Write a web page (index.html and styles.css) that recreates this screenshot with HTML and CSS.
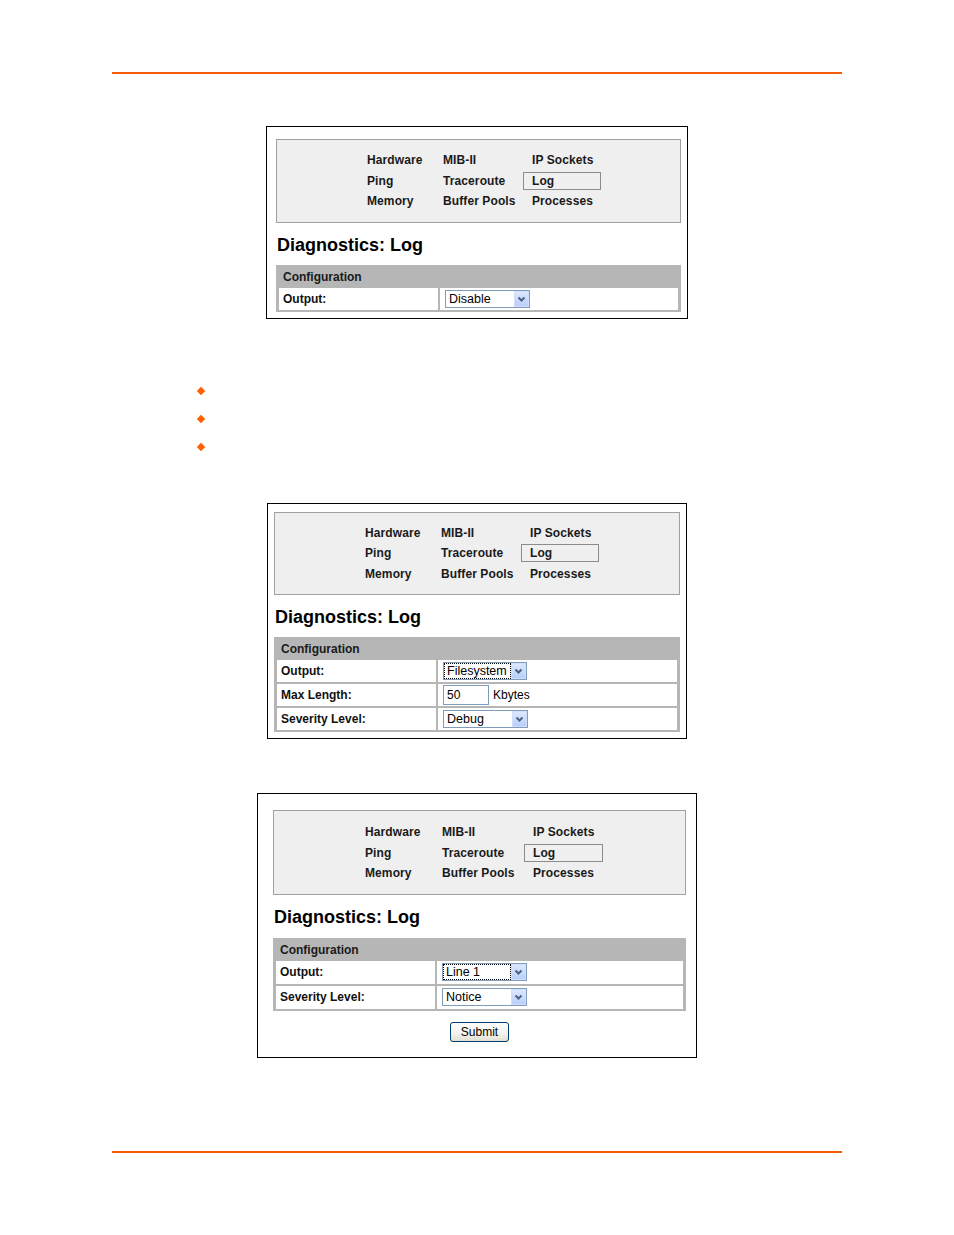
FILE: index.html
```html
<!DOCTYPE html>
<html>
<head>
<meta charset="utf-8">
<title>Diagnostics: Log</title>
<link rel="stylesheet" href="styles.css">
</head>
<body>
<div class="page">
  <div class="rule rule-top"></div>

  <div class="panel panel-1">
    <div class="nav">
      <span class="nav-item">Hardware</span><span class="nav-item">MIB-II</span><span class="nav-item">IP Sockets</span>
      <span class="nav-item">Ping</span><span class="nav-item">Traceroute</span><span class="nav-item nav-current">Log</span>
      <span class="nav-item">Memory</span><span class="nav-item">Buffer Pools</span><span class="nav-item">Processes</span>
    </div>
    <h1 class="title">Diagnostics: Log</h1>
    <div class="config">
      <div class="config-head">Configuration</div>
      <div class="config-row">
        <div class="label">Output:</div>
        <div class="value">
          <div class="select"><span class="select-text">Disable</span><span class="select-btn"><svg width="15" height="16" viewBox="0 0 15 16"><path d="M4.5 6.5 L7.5 9.5 L10.5 6.5" fill="none" stroke="#4d6185" stroke-width="2"/></svg></span></div>
        </div>
      </div>
    </div>
  </div>

  <ul class="bullets">
    <li class="bullet"></li>
    <li class="bullet"></li>
    <li class="bullet"></li>
  </ul>

  <div class="panel panel-2">
    <div class="nav">
      <span class="nav-item">Hardware</span><span class="nav-item">MIB-II</span><span class="nav-item">IP Sockets</span>
      <span class="nav-item">Ping</span><span class="nav-item">Traceroute</span><span class="nav-item nav-current">Log</span>
      <span class="nav-item">Memory</span><span class="nav-item">Buffer Pools</span><span class="nav-item">Processes</span>
    </div>
    <h1 class="title">Diagnostics: Log</h1>
    <div class="config">
      <div class="config-head">Configuration</div>
      <div class="config-row">
        <div class="label">Output:</div>
        <div class="value">
          <div class="select select-narrow"><span class="select-text select-focus">Filesystem</span><span class="select-btn"><svg width="15" height="16" viewBox="0 0 15 16"><path d="M4.5 6.5 L7.5 9.5 L10.5 6.5" fill="none" stroke="#4d6185" stroke-width="2"/></svg></span></div>
        </div>
      </div>
      <div class="config-row">
        <div class="label">Max Length:</div>
        <div class="value">
          <span class="textbox">50</span><span class="unit">Kbytes</span>
        </div>
      </div>
      <div class="config-row">
        <div class="label">Severity Level:</div>
        <div class="value">
          <div class="select"><span class="select-text">Debug</span><span class="select-btn"><svg width="15" height="16" viewBox="0 0 15 16"><path d="M4.5 6.5 L7.5 9.5 L10.5 6.5" fill="none" stroke="#4d6185" stroke-width="2"/></svg></span></div>
        </div>
      </div>
    </div>
  </div>

  <div class="panel panel-3">
    <div class="nav nav-tall">
      <span class="nav-item">Hardware</span><span class="nav-item">MIB-II</span><span class="nav-item">IP Sockets</span>
      <span class="nav-item">Ping</span><span class="nav-item">Traceroute</span><span class="nav-item nav-current">Log</span>
      <span class="nav-item">Memory</span><span class="nav-item">Buffer Pools</span><span class="nav-item">Processes</span>
    </div>
    <h1 class="title title-loose">Diagnostics: Log</h1>
    <div class="config">
      <div class="config-head">Configuration</div>
      <div class="config-row row-tall">
        <div class="label">Output:</div>
        <div class="value">
          <div class="select"><span class="select-text select-focus">Line 1</span><span class="select-btn"><svg width="15" height="16" viewBox="0 0 15 16"><path d="M4.5 6.5 L7.5 9.5 L10.5 6.5" fill="none" stroke="#4d6185" stroke-width="2"/></svg></span></div>
        </div>
      </div>
      <div class="config-row row-tall">
        <div class="label">Severity Level:</div>
        <div class="value">
          <div class="select"><span class="select-text">Notice</span><span class="select-btn"><svg width="15" height="16" viewBox="0 0 15 16"><path d="M4.5 6.5 L7.5 9.5 L10.5 6.5" fill="none" stroke="#4d6185" stroke-width="2"/></svg></span></div>
        </div>
      </div>
    </div>
    <div class="actions">
      <span class="button">Submit</span>
    </div>
  </div>

  <div class="rule rule-bottom"></div>
</div>
</body>
</html>
```

FILE: styles.css
```css
html, body {
  margin: 0;
  padding: 0;
  background: #ffffff;
}

.page {
  width: 954px;
  min-height: 1235px;
  font-family: "Liberation Sans", Arial, sans-serif;
  color: #111111;
  overflow: hidden;
}

.rule {
  width: 730px;
  height: 2px;
  margin-left: 112px;
  background: #f25a0a;
}

.rule-top {
  margin-top: 72px;
}

.rule-bottom {
  margin-top: 93px;
}

/* Panels */
.panel {
  box-sizing: border-box;
  border: 1px solid #000000;
  background: #ffffff;
}

.panel-1 {
  width: 422px;
  margin: 52px 0 0 266px;
  padding: 12px 6px 6px 9px;
}

.panel-2 {
  width: 420px;
  margin: 42px 0 0 267px;
  padding: 8px 6px 6px 6px;
}

.panel-3 {
  width: 440px;
  margin: 54px 0 0 257px;
  padding: 16px 10px 15px 15px;
}

/* Nav */
.nav {
  border: 1px solid #a0a0a0;
  background: #efefef;
  padding: 10px 0 10px 81px;
  display: grid;
  grid-template-columns: 76px 89px 78px;
  grid-auto-rows: 20.5px;
  align-items: center;
}

.nav-tall {
  padding: 11px 0 10px 82px;
  grid-template-columns: 77px 91px 79px;
}

.nav-item {
  box-sizing: border-box;
  padding-left: 9px;
  font-size: 12px;
  font-weight: bold;
  letter-spacing: 0.1px;
  line-height: 18px;
  height: 18px;
  white-space: nowrap;
  color: #1a1a1a;
}

.nav-current {
  border: 1px solid #8c8c8c;
  background: #f0f0f0;
  padding-left: 8px;
  line-height: 16px;
}

/* Title */
.title {
  margin: 11px 0 9px 1px;
  font-size: 18px;
  line-height: 22px;
  font-weight: bold;
  color: #000000;
}

.title-loose {
  margin-bottom: 10px;
}

/* Config table */
.config {
  background: #b6b6b6;
  padding: 0 3px 2px 3px;
  display: flex;
  flex-direction: column;
  gap: 2px;
}

.config-head {
  height: 21px;
  box-sizing: border-box;
  padding: 4px 0 0 4px;
  line-height: 17px;
  font-size: 12px;
  font-weight: bold;
  color: #1a1a1a;
}

.config-row {
  display: flex;
  gap: 2px;
  height: 22px;
}

.row-tall {
  height: 23px;
}

.label {
  box-sizing: border-box;
  width: 159px;
  flex: none;
  background: #ffffff;
  padding-left: 4px;
  font-size: 12px;
  font-weight: bold;
  line-height: 22px;
  color: #111111;
}

.row-tall .label {
  line-height: 23px;
}

.value {
  flex: 1;
  background: #ffffff;
  display: flex;
  align-items: center;
  padding-left: 5px;
  font-size: 12px;
}

/* Fake select */
.select {
  box-sizing: border-box;
  width: 85px;
  height: 18px;
  border: 1px solid #7f9db9;
  background: #ffffff;
  display: flex;
  align-items: center;
}

.select-narrow {
  width: 84px;
}

.select-text {
  flex: 1;
  box-sizing: border-box;
  height: 16px;
  padding-left: 3px;
  font-size: 12.5px;
  line-height: 16px;
  color: #000000;
  white-space: nowrap;
  overflow: hidden;
}

.select-focus {
  border: 1px dotted #000000;
  padding-left: 2px;
  line-height: 14px;
}

.select-btn {
  flex: none;
  width: 15px;
  height: 16px;
  box-sizing: border-box;
  background: linear-gradient(#dce7fd, #b9cffa);
  border: 1px solid #d2defb;
  display: flex;
}

.select-btn svg {
  display: block;
  margin: -1px;
}

/* Textbox */
.textbox {
  box-sizing: border-box;
  width: 46px;
  height: 20px;
  border: 1px solid #7f9db9;
  padding-left: 3px;
  font-size: 12px;
  line-height: 18px;
  color: #000000;
}

.unit {
  margin-left: 4px;
  font-size: 12px;
  color: #000000;
}

/* Bullets */
.bullets {
  list-style: none;
  margin: 58px 0 0 0;
  padding: 0;
}

.bullet {
  height: 28px;
  display: flex;
  align-items: center;
  padding-left: 198px;
}

.bullet::before {
  content: "";
  width: 6px;
  height: 6px;
  background: #ff6000;
  transform: rotate(45deg);
}

/* Submit */
.actions {
  margin-top: 11px;
  display: flex;
  justify-content: center;
}

.button {
  box-sizing: border-box;
  width: 59px;
  height: 20px;
  border: 1px solid #003c74;
  border-radius: 3px;
  background: linear-gradient(#ffffff, #f2f1ea 60%, #e3e0d4);
  text-align: center;
  font-size: 12px;
  line-height: 18px;
  color: #000000;
}
```
